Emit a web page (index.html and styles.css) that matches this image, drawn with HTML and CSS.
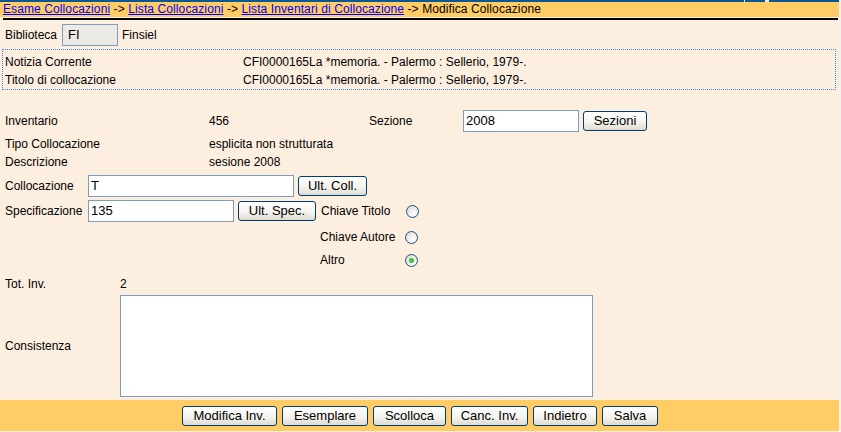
FILE: index.html
```html
<!DOCTYPE html>
<html>
<head>
<meta charset="utf-8">
<link rel="stylesheet" href="styles.css">
</head>
<body>
<div class="page">
  <div class="topstrip"><span class="mark m1"></span><span class="mark m2"></span></div>
  <div class="crumbs">
    <a href="#">Esame Collocazioni</a> -&gt; <a href="#">Lista Collocazioni</a> -&gt; <a href="#">Lista Inventari di Collocazione</a> -&gt; Modifica Collocazione
  </div>
  <div class="rule"></div>

  <div class="bib">
    <span class="lbl">Biblioteca</span>
    <span class="field disabled">FI</span>
    <span>Finsiel</span>
  </div>

  <div class="notice">
    <div class="nrow"><span class="ncol">Notizia Corrente</span><span>CFI0000165La *memoria. - Palermo : Sellerio, 1979-.</span></div>
    <div class="nrow"><span class="ncol">Titolo di collocazione</span><span>CFI0000165La *memoria. - Palermo : Sellerio, 1979-.</span></div>
  </div>

  <div class="form">
    <div class="row r-inv">
      <span class="c1">Inventario</span>
      <span class="c2">456</span>
      <span class="c3">Sezione</span>
      <span class="field w-sez">2008</span>
      <button class="btn">Sezioni</button>
    </div>
    <div class="row r-tipo">
      <span class="c1">Tipo Collocazione</span>
      <span>esplicita non strutturata</span>
    </div>
    <div class="row r-desc">
      <span class="c1">Descrizione</span>
      <span>sesione 2008</span>
    </div>
    <div class="row r-coll">
      <span class="cl">Collocazione</span>
      <span class="field w-coll">T</span>
      <button class="btn">Ult. Coll.</button>
    </div>
    <div class="row r-spec">
      <span class="cl">Specificazione</span>
      <span class="field w-spec">135</span>
      <button class="btn">Ult. Spec.</button>
      <span class="ck">Chiave Titolo</span>
      <span class="radio"></span>
    </div>
    <div class="row r-aut">
      <span class="ck">Chiave Autore</span>
      <span class="radio"></span>
    </div>
    <div class="row r-alt">
      <span class="ck">Altro</span>
      <span class="radio on"></span>
    </div>
    <div class="row r-tot">
      <span class="ct">Tot. Inv.</span>
      <span>2</span>
    </div>
    <div class="row r-cons">
      <span class="ct">Consistenza</span>
      <span class="area"></span>
    </div>
  </div>

  <div class="footer">
    <button class="btn">Modifica Inv.</button>
    <button class="btn">Esemplare</button>
    <button class="btn">Scolloca</button>
    <button class="btn">Canc. Inv.</button>
    <button class="btn">Indietro</button>
    <button class="btn">Salva</button>
  </div>
</div>
</body>
</html>
```

FILE: styles.css
```css
html, body {
  margin: 0;
  padding: 0;
  background: #f3f1ec;
}
body {
  font-family: "Liberation Sans", Arial, sans-serif;
  font-size: 12px;
  color: #000;
}
.page {
  width: 839px;
  height: 432px;
  background: #fdefe0;
  overflow: hidden;
}
.topstrip {
  height: 2px;
  background: #0b5794;
  position: relative;
}
.mark {
  position: absolute;
  top: 0;
  width: 1px;
  height: 2px;
  background: #e8eef5;
}
.m1 { left: 744px; }
.m2 { left: 765px; width: 4px; }
.crumbs {
  height: 15px;
  line-height: 15px;
  background: #ffcc66;
  padding-left: 3px;
  white-space: nowrap;
  letter-spacing: 0.1px;
}
.crumbs a {
  color: #0000ff;
  text-decoration: underline;
}
.rule {
  margin: 1px 0 0 3px;
  height: 2px;
  width: 835px;
  background: #000;
}
.bib {
  display: flex;
  align-items: center;
  height: 22px;
  margin-top: 4px;
  padding-left: 5px;
}
.bib .lbl { width: 57px; }
.field {
  box-sizing: border-box;
  height: 22px;
  border: 1px solid #7f9db9;
  background: #fff;
  padding: 0 2px;
  font-size: 13px;
  line-height: 20px;
  display: inline-block;
}
.field.disabled {
  width: 56px;
  background: #ebeae4;
  padding-left: 5px;
  margin-right: 4px;
}
.notice {
  margin: 3px 3px 0 2px;
  height: 41px;
  box-sizing: border-box;
  border: 1px dotted #3c8ad6;
  padding-top: 3px;
}
.nrow {
  display: flex;
  height: 18px;
  line-height: 18px;
  padding-left: 2px;
}
.ncol { width: 238px; }
.form {
  padding-top: 20px;
  padding-left: 5px;
}
.row {
  display: flex;
  align-items: center;
}
.r-inv { height: 22px; }
.r-tipo { height: 18px; margin-top: 3px; }
.r-desc { height: 18px; }
.r-coll { height: 22px; margin-top: 4px; }
.r-spec { height: 22px; margin-top: 3px; }
.r-aut { height: 22px; margin-top: 4px; }
.r-alt { height: 22px; margin-top: 1px; }
.r-tot { height: 18px; margin-top: 4px; }
.r-cons { align-items: center; margin-top: 2px; }
.c1 { width: 204px; }
.c2 { width: 160px; }
.c3 { width: 94px; }
.cl { width: 83px; }
.ct { width: 115px; }
.w-sez { width: 116px; margin-right: 4px; }
.w-coll { width: 206px; margin-right: 4px; }
.w-spec { width: 146px; margin-right: 4px; }
.ck { width: 85px; }
.r-spec .ck { margin-left: 5px; }
.r-aut, .r-alt { padding-left: 315px; }
.btn {
  box-sizing: border-box;
  height: 20px;
  padding: 0 7px;
  border: 1px solid #003c74;
  border-radius: 3px;
  background: linear-gradient(#ffffff, #f3f2ec 60%, #dedbd0);
  font-family: "Liberation Sans", Arial, sans-serif;
  font-size: 13px;
  line-height: 18px;
  color: #000;
  margin: 0;
}
.r-inv .btn { width: 64px; }
.r-coll .btn { width: 69px; }
.r-spec .btn { width: 78px; }
.radio {
  box-sizing: border-box;
  width: 13px;
  height: 13px;
  border: 1px solid #1c5180;
  border-radius: 50%;
  background: radial-gradient(circle at 65% 70%, #ffffff, #dcdcd4 90%);
  position: relative;
}
.radio.on::after {
  content: "";
  position: absolute;
  left: 3px;
  top: 3px;
  width: 5px;
  height: 5px;
  border-radius: 50%;
  background: radial-gradient(circle, #5cd65c, #21a121);
}
.area {
  box-sizing: border-box;
  width: 473px;
  height: 102px;
  border: 1px solid #7f9db9;
  background: #fff;
}
.footer {
  margin-top: 3px;
  height: 31px;
  background: #ffcc66;
  display: flex;
  justify-content: center;
  align-items: center;
  gap: 5px;
  padding-left: 1px;
}
.footer .btn { height: 20px; }
.footer .btn:nth-child(1) { width: 95px; }
.footer .btn:nth-child(2) { width: 86px; }
.footer .btn:nth-child(3) { width: 73px; }
.footer .btn:nth-child(4) { width: 77px; }
.footer .btn:nth-child(5) { width: 64px; }
.footer .btn:nth-child(6) { width: 56px; }
```
